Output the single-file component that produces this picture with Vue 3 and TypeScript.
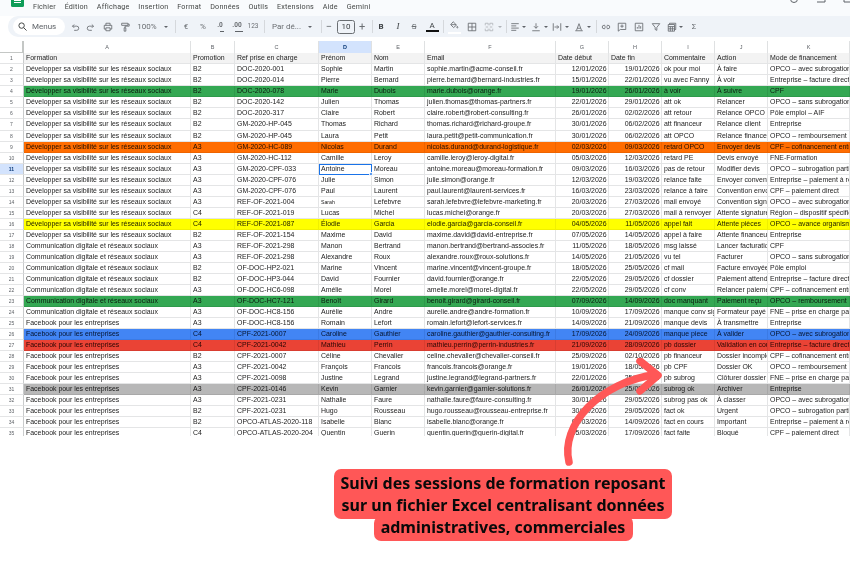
<script setup lang="ts">
const menus = ['Fichier', 'Édition', 'Affichage', 'Insertion', 'Format', 'Données', 'Outils', 'Extensions', 'Aide', 'Gemini']
const letters = ['A', 'B', 'C', 'D', 'E', 'F', 'G', 'H', 'I', 'J', 'K']

const paths: Record<string, string> = {
  undo: 'M3 5h5a2.500 2.500 0 0 1 0 5H5M3 5l2-2M3 5l2 2',
  redo: 'M9 5H4a2.500 2.500 0 0 0 0 5h3M9 5L7 3M9 5L7 7',
  print: 'M3.500 4V1.500h5V4M3.500 8.500H1.500V4h9v4.500h-2M3.500 7h5v3.500h-5z',
  paint: 'M2 1.500h7.500v2.500H2zM9.500 2.500h1.500v2.500H6v2M5 7h2v4H5z',
  border: 'M1.500 1.500h9v9h-9zM6 1.500v9M1.500 6h9',
  merge: 'M1.500 4V1.500H5V4M7 4V1.500h3.500V4M1.500 8v2.500H5V8M7 8v2.500h3.500V8M2 6h3M7 6h3',
  align: 'M1.500 2h9M1.500 4.670h6M1.500 7.330h9M1.500 10h6',
  valign: 'M6 1.500v6M3.500 5L6 7.500 8.500 5M1.500 10.500h9',
  wrap: 'M1.500 1.500v9M10.500 1.500v9M3 6h5M6 4l2 2-2 2',
  rotate: 'M3 10l3-8 3 8M4 7.500h4M1.500 10.500h9',
  link: 'M5 4H3.500a2 2 0 0 0 0 4H5M7 4h1.500a2 2 0 0 1 0 4H7M4 6h4',
  comment: 'M1.500 1.500h9v7.500H4L1.500 11zM6 3v4M4 5h4',
  chart: 'M1.500 1.500h9v9h-9zM4 8V6M6 8V3.500M8 8V5',
  filter: 'M1.500 2h9L7 6.500V10L5 9V6.500z',
  ftable: 'M1.500 3h7.500v8h-7.500zM1.500 5.500h7.500M1.500 8.200h7.500M4 5.500V11M6.500 5.500V11M3 3V1.500h7.500V9H9'
}

interface Tool { c: number; w?: number; k: string; t?: string; cls?: string }
const raw: Tool[] = [
  { c: 75, k: 'undo' }, { c: 91, k: 'redo' }, { c: 108, k: 'print' }, { c: 125, k: 'paint' },
  { c: 147, w: 22, k: 'txt', t: '100%' }, { c: 166, w: 5, k: 'caret' }, { c: 175.5, w: 1, k: 'sep' },
  { c: 186, w: 9, k: 'txt', t: '€' }, { c: 203, w: 9, k: 'txt', t: '%' },
  { c: 220, w: 12, k: 'dec', t: '.0' }, { c: 237, w: 12, k: 'dec', t: '.00' },
  { c: 253, w: 12, k: 'txt', t: '123', cls: 'small' }, { c: 264, w: 1, k: 'sep' },
  { c: 286.5, w: 28, k: 'txt', t: 'Par dé...' }, { c: 310, w: 5, k: 'caret' }, { c: 321, w: 1, k: 'sep' },
  { c: 329, w: 8, k: 'txt', t: '−', cls: 'big' }, { c: 346, w: 18, k: 'box', t: '10' },
  { c: 362, w: 8, k: 'txt', t: '+', cls: 'big' }, { c: 372, w: 1, k: 'sep' },
  { c: 381, w: 8, k: 'txt', t: 'B', cls: 'bold' }, { c: 398, w: 8, k: 'txt', t: 'I', cls: 'ital' },
  { c: 414, w: 9, k: 'strike', t: 'S' }, { c: 432, w: 13, k: 'color', t: 'A' }, { c: 443, w: 1, k: 'sep' },
  { c: 454, w: 13, k: 'fillc' }, { c: 472, k: 'border' }, { c: 489, k: 'merge', cls: 'faint' },
  { c: 500, w: 5, k: 'caret', cls: 'faint' }, { c: 506, w: 1, k: 'sep' },
  { c: 515, k: 'align' }, { c: 524, w: 5, k: 'caret' }, { c: 536, k: 'valign' }, { c: 546, w: 5, k: 'caret' },
  { c: 557, k: 'wrap' }, { c: 567, w: 5, k: 'caret' }, { c: 579, k: 'rotate' }, { c: 589, w: 5, k: 'caret' },
  { c: 596, w: 1, k: 'sep' }, { c: 606, k: 'link' }, { c: 622, k: 'comment' }, { c: 639, k: 'chart' },
  { c: 656, k: 'filter' }, { c: 672, k: 'ftable' }, { c: 681, w: 5, k: 'caret' },
  { c: 694, w: 8, k: 'txt', t: 'Σ' }
]
let edge = 65
const tools = raw.map((t) => {
  const w = t.w ?? 12
  const left = t.c - w / 2
  const gap = left - edge
  edge = left + w
  return { ...t, w, gap }
})

const D = 'Développer sa visibilité sur les réseaux sociaux'
const C = 'Communication digitale et réseaux sociaux'
const F = 'Facebook pour les entreprises'
const lines: string[] = [
  `Formation|Promotion|Ref prise en charge|Prénom|Nom|Email|Date début|Date fin|Commentaire|Action|Mode de financement`,
  `${D}|B2|DOC-2020-001|Sophie|Martin|sophie.martin@acme-conseil.fr|12/01/2026|19/01/2026|ok pour moi|À faire|OPCO – avec subrogation`,
  `${D}|B2|DOC-2020-014|Pierre|Bernard|pierre.bernard@bernard-industries.fr|15/01/2026|22/01/2026|vu avec Fanny|À voir|Entreprise – facture directe`,
  `${D}|B2|DOC-2020-078|Marie|Dubois|marie.dubois@orange.fr|19/01/2026|26/01/2026|à voir|À suivre|CPF`,
  `${D}|B2|DOC-2020-142|Julien|Thomas|julien.thomas@thomas-partners.fr|22/01/2026|29/01/2026|att ok|Relancer|OPCO – sans subrogation`,
  `${D}|B2|DOC-2020-317|Claire|Robert|claire.robert@robert-consulting.fr|26/01/2026|02/02/2026|att retour|Relance OPCO|Pôle emploi – AIF`,
  `${D}|B2|GM-2020-HP-045|Thomas|Richard|thomas.richard@richard-groupe.fr|30/01/2026|06/02/2026|att financeur|Relance client|Entreprise`,
  `${D}|B2|GM-2020-HP-045|Laura|Petit|laura.petit@petit-communication.fr|30/01/2026|06/02/2026|att OPCO|Relance financeur|OPCO – remboursement`,
  `${D}|A3|GM-2020-HC-089|Nicolas|Durand|nicolas.durand@durand-logistique.fr|02/03/2026|09/03/2026|retard OPCO|Envoyer devis|CPF – cofinancement entreprise`,
  `${D}|A3|GM-2020-HC-112|Camille|Leroy|camille.leroy@leroy-digital.fr|05/03/2026|12/03/2026|retard PE|Devis envoyé|FNE-Formation`,
  `${D}|A3|GM-2020-CPF-033|Antoine|Moreau|antoine.moreau@moreau-formation.fr|09/03/2026|16/03/2026|pas de retour|Modifier devis|OPCO – subrogation partielle`,
  `${D}|A3|GM-2020-CPF-076|Julie|Simon|julie.simon@orange.fr|12/03/2026|19/03/2026|relance faite|Envoyer convention|Entreprise – paiement à réception`,
  `${D}|A3|GM-2020-CPF-076|Paul|Laurent|paul.laurent@laurent-services.fr|16/03/2026|23/03/2026|relance à faire|Convention envoyée|CPF – paiement direct`,
  `${D}|A3|REF-OF-2021-004|Sarah|Lefebvre|sarah.lefebvre@lefebvre-marketing.fr|20/03/2026|27/03/2026|mail envoyé|Convention signée|OPCO – avec subrogation`,
  `${D}|C4|REF-OF-2021-019|Lucas|Michel|lucas.michel@orange.fr|20/03/2026|27/03/2026|mail à renvoyer|Attente signature|Région – dispositif spécifique`,
  `${D}|C4|REF-OF-2021-087|Élodie|Garcia|elodie.garcia@garcia-conseil.fr|04/05/2026|11/05/2026|appel fait|Attente pièces|OPCO – avance organisme`,
  `${D}|B2|REF-OF-2021-154|Maxime|David|maxime.david@david-entreprise.fr|07/05/2026|14/05/2026|appel à faire|Attente financeur|Entreprise`,
  `${C}|A3|REF-OF-2021-298|Manon|Bertrand|manon.bertrand@bertrand-associes.fr|11/05/2026|18/05/2026|msg laissé|Lancer facturation|CPF`,
  `${C}|A3|REF-OF-2021-298|Alexandre|Roux|alexandre.roux@roux-solutions.fr|14/05/2026|21/05/2026|vu tel|Facturer|OPCO – sans subrogation`,
  `${C}|B2|OF-DOC-HP2-021|Marine|Vincent|marine.vincent@vincent-groupe.fr|18/05/2026|25/05/2026|cf mail|Facture envoyée|Pôle emploi`,
  `${C}|B2|OF-DOC-HP3-044|David|Fournier|david.fournier@orange.fr|22/05/2026|29/05/2026|cf dossier|Paiement attendu|Entreprise – facture directe`,
  `${C}|A3|OF-DOC-HC6-098|Amélie|Morel|amelie.morel@morel-digital.fr|22/05/2026|29/05/2026|cf conv|Relancer paiement|CPF – cofinancement entreprise`,
  `${C}|A3|OF-DOC-HC7-121|Benoît|Girard|benoit.girard@girard-conseil.fr|07/09/2026|14/09/2026|doc manquant|Paiement reçu|OPCO – remboursement`,
  `${C}|A3|OF-DOC-HC8-156|Aurélie|Andre|aurelie.andre@andre-formation.fr|10/09/2026|17/09/2026|manque conv signée|Formateur payé|FNE – prise en charge partielle`,
  `${F}|A3|OF-DOC-HC8-156|Romain|Lefort|romain.lefort@lefort-services.fr|14/09/2026|21/09/2026|manque devis|À transmettre|Entreprise`,
  `${F}|C4|CPF-2021-0007|Caroline|Gauthier|caroline.gauthier@gauthier-consulting.fr|17/09/2026|24/09/2026|manque piece|À valider|OPCO – avec subrogation`,
  `${F}|C4|CPF-2021-0042|Mathieu|Perrin|mathieu.perrin@perrin-industries.fr|21/09/2026|28/09/2026|pb dossier|Validation en cours|Entreprise – facture directe`,
  `${F}|B2|CPF-2021-0007|Céline|Chevalier|celine.chevalier@chevalier-conseil.fr|25/09/2026|02/10/2026|pb financeur|Dossier incomplet|CPF – cofinancement entreprise`,
  `${F}|A3|CPF-2021-0042|François|Francois|francois.francois@orange.fr|19/01/2026|18/05/2026|pb CPF|Dossier OK|OPCO – remboursement`,
  `${F}|A3|CPF-2021-0098|Justine|Legrand|justine.legrand@legrand-partners.fr|22/01/2026|25/05/2026|pb subrog|Clôturer dossier|FNE – prise en charge partielle`,
  `${F}|A3|CPF-2021-0146|Kevin|Garnier|kevin.garnier@garnier-solutions.fr|26/01/2026|25/05/2026|subrog ok|Archiver|Entreprise`,
  `${F}|A3|CPF-2021-0231|Nathalie|Faure|nathalie.faure@faure-consulting.fr|30/01/2026|29/05/2026|subrog pas ok|À classer|OPCO – avec subrogation`,
  `${F}|B2|CPF-2021-0231|Hugo|Rousseau|hugo.rousseau@rousseau-entreprise.fr|30/01/2026|29/05/2026|fact ok|Urgent|OPCO – subrogation partielle`,
  `${F}|B2|OPCO-ATLAS-2020-118|Isabelle|Blanc|isabelle.blanc@orange.fr|02/03/2026|14/09/2026|fact en cours|Important|Entreprise – paiement à réception`,
  `${F}|C4|OPCO-ATLAS-2020-204|Quentin|Guerin|quentin.guerin@guerin-digital.fr|05/03/2026|17/09/2026|fact faite|Bloqué|CPF – paiement direct`
]
const tones: Record<number, string> = { 1: 'head', 4: 'green', 9: 'orange', 16: 'yellow', 23: 'green', 26: 'blue', 27: 'red', 31: 'grey' }
const rows = lines.map((l, i) => ({ n: i + 1, cells: l.split('|'), tone: tones[i + 1] ?? '' }))
</script>

<template>
  <div class="page">
    <div class="menubar">
      <span class="logo"><i></i><i></i></span>
      <nav class="menus"><span v-for="m in menus" :key="m">{{ m }}</span></nav>
      <div class="top-icons">
        <svg width="10" height="10" viewBox="0 0 10 10"><circle cx="5" cy="-1" r="3.500" /></svg>
        <svg width="10" height="10" viewBox="0 0 10 10"><path d="M1 -3h8v5H1" /></svg>
        <svg width="10" height="10" viewBox="0 0 10 10"><path d="M1 -3h9v5H1z" /></svg>
      </div>
    </div>

    <div class="toolbar">
      <div class="search">
        <svg width="9" height="9" viewBox="0 0 10 10"><circle cx="4" cy="4" r="3" /><path d="M6.300 6.300L9.500 9.500" /></svg>
        <span>Menus</span>
      </div>
      <div
        v-for="(t, i) in tools"
        :key="i"
        class="tool"
        :class="[t.cls, 'k-' + t.k]"
        :style="{ width: t.w + 'px', marginLeft: t.gap + 'px' }"
      >
        <svg v-if="paths[t.k]" width="10" height="10" viewBox="0 0 12 12"><path :d="paths[t.k]" /></svg>
        <template v-else-if="t.k === 'txt' || t.k === 'box' || t.k === 'strike'">{{ t.t }}</template>
        <template v-else-if="t.k === 'dec'">
          <span class="dec">{{ t.t }}</span>
        </template>
        <template v-else-if="t.k === 'color'">
          <span class="col-a">{{ t.t }}</span>
        </template>
        <template v-else-if="t.k === 'fillc'">
          <svg width="10" height="9" viewBox="0 0 12 10"><path d="M5 .5l4 4-3.500 3-3.500-3.500zM2.500 4h6M10 6c.8 1 .8 2 0 2s-.8-1 0-2z" /></svg>
        </template>
      </div>
    </div>

    <section class="sheet">
      <div class="row letters">
        <div class="corner"></div>
        <div v-for="(l, i) in letters" :key="l" class="letter" :class="{ on: i === 3 }">{{ l }}</div>
      </div>
      <div v-for="r in rows" :key="r.n" class="row data" :class="r.tone">
        <div class="num" :class="{ on: r.n === 11 }">{{ r.n }}</div>
        <div
          v-for="(c, i) in r.cells"
          :key="i"
          class="cell"
          :class="{
            date: r.n > 1 && (i === 6 || i === 7),
            tiny: r.n === 14 && i === 3,
            active: r.n === 11 && i === 3
          }"
        >{{ c }}<span v-if="r.n === 11 && i === 3" class="handle"></span></div>
      </div>
    </section>

    <svg class="arrow" width="120" height="110" viewBox="550 358 120 110">
      <path d="M569 462C560 425 600 382 656 374.500" />
      <path d="M640 361L658 375.500 640 391" />
    </svg>

    <div class="callout">
      <p class="c1">Suivi des sessions de formation reposant<br />sur un fichier Excel centralisant données</p>
      <p class="c2">administratives, commerciales</p>
    </div>
  </div>
</template>

<style scoped>
.page {
  position: relative;
  width: 850px;
  height: 574px;
  overflow: hidden;
  background: #fff;
  filter: blur(0.4px);
  font-family: "Liberation Sans", Arial, sans-serif;
}
.menubar {
  height: 16px;
  background: #f9fbfd;
  display: flex;
  align-items: flex-start;
  padding-left: 11px;
  box-sizing: border-box;
  width: 850px;
  overflow: hidden;
  position: relative;
}
.logo {
  width: 13px;
  height: 7px;
  background: #0f9d58;
  border-radius: 0 0 1.500px 1.500px;
  position: relative;
  display: block;
}
.logo i {
  position: absolute;
  left: 3px;
  right: 3px;
  height: 1px;
  background: #fff;
}
.logo i:first-child { top: 0; }
.logo i:last-child { top: 2px; }
.menus {
  display: flex;
  gap: 8.800px;
  margin-left: 9px;
  margin-top: 1px;
  font: 7.200px/11px Roboto, sans-serif;
  letter-spacing: 0.2px;
  color: #444746;
}
.top-icons {
  margin-left: auto;
  display: flex;
  gap: 17px;
  margin-right: -3px;
}
.top-icons svg { fill: none; stroke: #5f6368; stroke-width: 1; display: block; overflow: visible; }
.toolbar {
  height: 21px;
  margin-left: 8px;
  background: #eff3f8;
  border-radius: 10px 0 0 10px;
  display: flex;
  align-items: center;
  padding-left: 5px;
  color: #6a6e72;
  font: 8px/1 Roboto, sans-serif;
  white-space: nowrap;
  width: 842px;
  box-sizing: border-box;
}
.search {
  width: 52px;
  height: 17px;
  border-radius: 9px;
  background: #fff;
  flex: none;
  display: flex;
  align-items: center;
  gap: 5px;
  padding-left: 5px;
  box-sizing: border-box;
  color: #5f6368;
  font-size: 8px;
}
.search svg { fill: none; stroke: #444746; stroke-width: 1.100; flex: none; }
.tool {
  flex: none;
  height: 14px;
  display: flex;
  align-items: center;
  justify-content: center;
}
.tool svg {
  fill: none;
  stroke: #65696d;
  stroke-width: 1;
  display: block;
  flex: none;
}
.k-sep { width: 1px; height: 13px; background: #d5d8dc; }
.k-caret::before {
  content: "";
  border-left: 2.500px solid transparent;
  border-right: 2.500px solid transparent;
  border-top: 2.500px solid #5f6368;
}
.k-box {
  border: 1px solid #6a6e72;
  border-radius: 2.500px;
  box-sizing: border-box;
  color: #3c4043;
  font-size: 8px;
}
.big { font-size: 11px; }
.small { font-size: 6.500px; }
.bold { font-weight: 700; font-size: 8px; color: #3c4043; }
.ital { font-style: italic; font-family: "Liberation Serif", serif; font-size: 9px; color: #3c4043; }
.k-strike { text-decoration: line-through; font-size: 8px; }
.faint { opacity: 0.45; }
.dec {
  font-size: 6.500px;
  font-weight: 700;
  margin-top: -3px;
  position: relative;
}
.dec::after {
  content: "";
  position: absolute;
  left: 3px;
  right: -1px;
  top: 9px;
  height: 1px;
  background: #5f6368;
}
.col-a {
  display: block;
  width: 13px;
  text-align: center;
  font-size: 8px;
  line-height: 9px;
  color: #3c4043;
  border-bottom: 2px solid #111;
}
.k-fillc { border-bottom: 2px solid #fff; box-sizing: border-box; }
.sheet {
  margin-top: 4px;
  height: 395px;
  overflow: hidden;
  font-size: 6.950px;
  background: #fff;
}
.row {
  display: grid;
  grid-template-columns: 24px 167px 44px 84px 53px 53px 131px 53px 53px 53px 53px 82px;
  width: 850px;
}
.letters { height: 12.400px; }
.corner {
  background: #fff;
  border-right: 2px solid #c4c7c5;
  border-bottom: 2px solid #c4c7c5;
  box-sizing: border-box;
}
.letter {
  text-align: center;
  line-height: 12px;
  color: #5f6368;
  font-size: 5.500px;
  border-right: 1px solid #dfe1e2;
  border-bottom: 1px solid #c9cbcc;
  box-sizing: border-box;
}
.letter.on { background: #d3e3fd; color: #0b3a78; font-weight: 700; }
.data { height: 11.020px; }
.num {
  text-align: center;
  line-height: 10px;
  color: #5f6368;
  font-size: 5px;
  background: #fff;
  border-right: 1px solid #c9cbcc;
  border-bottom: 1px solid #e4e5e6;
  box-sizing: border-box;
}
.num.on { background: #d3e3fd; color: #0b3a78; font-weight: 700; }
.cell {
  position: relative;
  line-height: 10.500px;
  padding: 0 1.500px 0 2px;
  overflow: hidden;
  white-space: nowrap;
  color: #222;
  border-right: 1px solid #e4e5e6;
  border-bottom: 1px solid #e4e5e6;
  box-sizing: border-box;
  min-width: 0;
}
.date { text-align: right; }
.tiny { font-size: 5.200px; }
.active {
  overflow: visible;
  outline: 1px solid #1a73e8;
  outline-offset: -1px;
  z-index: 2;
}
.handle {
  position: absolute;
  right: -2px;
  bottom: -2px;
  width: 4px;
  height: 4px;
  border-radius: 50%;
  background: #1a73e8;
  border: 0.500px solid #fff;
  box-sizing: border-box;
}
.head .cell { background: #f3f3f3; }
.green .cell { background: #34a853; border-color: #2e9a4b; color: #0b1a0e; }
.orange .cell { background: #ff6d01; border-color: #ee6400; color: #1f0d00; }
.yellow .cell { background: #ffff00; border-color: #f0f000; color: #1c1c00; }
.blue .cell { background: #4285f4; border-color: #3b7ae4; color: #06142e; }
.red .cell { background: #ea4335; border-color: #d93d30; color: #2a0603; }
.grey .cell { background: #b7b7b7; border-color: #a8a8a8; color: #161616; }
.arrow {
  position: absolute;
  left: 550px;
  top: 358px;
  fill: none;
  stroke: #ff5757;
  stroke-width: 7.500;
  stroke-linecap: round;
  stroke-linejoin: round;
}
.callout {
  position: absolute;
  left: 334px;
  top: 469px;
  width: 338px;
  display: flex;
  flex-direction: column;
  align-items: center;
  text-align: center;
  font: 700 16px/22px "Noto Sans", "Open Sans", sans-serif;
  color: #0a0a0a;
}
.callout p {
  margin: 0;
  background: #ff5757;
  border-radius: 7px;
  white-space: nowrap;
}
.c1 { width: 338px; padding: 3px 0; position: relative; z-index: 1; }
.c2 { width: 259px; margin-top: -3px !important; padding-bottom: 3px; }
</style>
